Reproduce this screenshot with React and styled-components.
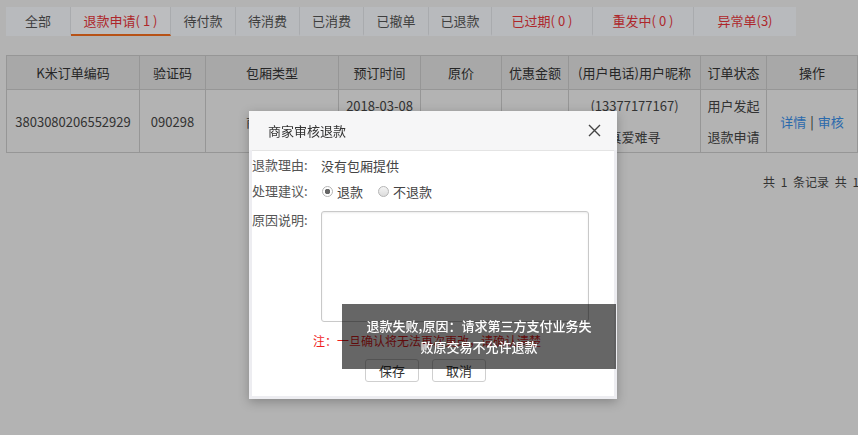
import styled, { createGlobalStyle } from "styled-components";

const GlobalStyle = createGlobalStyle`
  html, body {
    margin: 0;
    padding: 0;
    background: #efefef;
    overflow: hidden;
  }
  body {
    font-family: "Noto Sans CJK SC", "Noto Sans", sans-serif;
    font-size: 13px;
    color: #444;
  }
`;

const Page = styled.div`
  position: relative;
  width: 858px;
  height: 435px;
  padding: 7px 0 0 6px;
  box-sizing: border-box;
`;

const Tabs = styled.ul`
  display: flex;
  margin: 0;
  padding: 0;
  list-style: none;
`;

const Tab = styled.li`
  width: ${(p) => p.$w}px;
  height: 29px;
  box-sizing: border-box;
  display: flex;
  align-items: center;
  justify-content: center;
  background: ${(p) => (p.$active ? "#fbfcff" : "#f6f8fc")};
  border-right: 1px solid #e2e4e9;
  border-bottom: 2px solid ${(p) => (p.$active ? "#f46e1e" : "#f6f8fc")};
  color: ${(p) => (p.$red ? "#e8353a" : "#555")};
  font-size: 13px;
  white-space: pre;
  &:last-child {
    border-right: none;
  }
`;

const Table = styled.table`
  margin-top: 19px;
  width: 851px;
  border-collapse: collapse;
  table-layout: fixed;
  text-align: center;
`;

const Th = styled.th`
  height: 33px;
  background: #e0e0e0;
  border: 1px solid #c8c8c8;
  font-weight: normal;
  color: #333;
  padding: 0;
`;

const Td = styled.td`
  height: 62px;
  border: 1px solid #c8c8c8;
  background: #efefef;
  color: #444;
  line-height: 31px;
  padding: 0;
  white-space: nowrap;
`;

const Link = styled.a`
  color: #3a8ee6;
  text-decoration: none;
`;

const Sep = styled.span`
  color: #333;
  margin: 0 4px;
`;

const Pager = styled.div`
  margin: 20px 0 0 757px;
  font-size: 12px;
  color: #444;
  white-space: nowrap;
  word-spacing: 3px;
`;

const Overlay = styled.div`
  position: fixed;
  inset: 0;
  background: rgba(0, 0, 0, 0.25);
`;

const Dialog = styled.div`
  position: absolute;
  left: 249px;
  top: 111px;
  width: 368px;
  height: 288px;
  box-sizing: border-box;
  background: #ededf1;
  padding: 0 3px 3px;
  display: flex;
  flex-direction: column;
  box-shadow: 0 3px 10px rgba(0, 0, 0, 0.25);
`;

const TitleBar = styled.div`
  height: 39px;
  margin: 0 -3px;
  padding: 0 16px 0 19px;
  display: flex;
  align-items: center;
  justify-content: space-between;
  background: rgba(247, 247, 247, 0.94);
  color: #333;
  font-size: 13px;
`;

const Close = styled.svg`
  width: 13px;
  height: 13px;
`;

const Body = styled.div`
  flex: 1;
  background: #fff;
  border-top: 1px solid #e4e4e4;
  padding-top: 1px;
  display: flex;
  flex-direction: column;
`;

const Row = styled.div`
  display: flex;
  align-items: ${(p) => (p.$top ? "flex-start" : "center")};
  min-height: 26px;
  margin-top: ${(p) => p.$mt || 0}px;
`;

const Label = styled.span`
  width: 69px;
  flex: none;
  color: #555;
  line-height: 18px;
`;

const Value = styled.span`
  color: #444;
`;

const RadioGroup = styled.label`
  display: flex;
  align-items: center;
  margin-right: 14px;
  color: #444;
`;

const Radio = styled.span`
  width: 11px;
  height: 11px;
  border-radius: 50%;
  box-sizing: border-box;
  border: 1px solid #b5b5b5;
  background: ${(p) =>
    p.$checked
      ? "radial-gradient(circle, #666 0 2.5px, #fff 3px)"
      : "linear-gradient(#f4f4f4, #dcdcdc)"};
  margin: 1px 4px 0 1px;
`;

const TextArea = styled.textarea`
  width: 268px;
  height: 111px;
  box-sizing: border-box;
  border: 1px solid #c9c9c9;
  border-radius: 3px;
  box-shadow: inset 0 1px 2px rgba(0, 0, 0, 0.08);
  resize: none;
  outline: none;
  font-family: inherit;
`;

const Note = styled.div`
  margin: 10px 0 0 61px;
  color: #f01e1e;
  font-size: 12px;
  line-height: 18px;
`;

const Buttons = styled.div`
  display: flex;
  gap: 13px;
  margin: 9px 0 0 113px;
`;

const Button = styled.button`
  width: 54px;
  height: 23px;
  border: 1px solid #cfcfcf;
  border-radius: 3px;
  background: #fff;
  color: #333;
  font-family: inherit;
  font-size: 13px;
  padding: 0;
`;

const Toast = styled.div`
  position: absolute;
  left: 342px;
  top: 304px;
  width: 274px;
  height: 65px;
  box-sizing: border-box;
  padding: 11px 22px 0;
  background: rgba(0, 0, 0, 0.6);
  color: #fff;
  font-size: 13px;
  line-height: 21px;
  text-align: center;
  font-weight: 500;
`;

const tabs = [
  { t: "全部", w: 65 },
  { t: "退款申请( 1 )", w: 100, active: true, red: true },
  { t: "待付款", w: 65 },
  { t: "待消费", w: 64 },
  { t: "已消费", w: 64 },
  { t: "已撤单", w: 65 },
  { t: "已退款", w: 63 },
  { t: "已过期( 0 )", w: 101, red: true },
  { t: "重发中( 0 )", w: 101, red: true },
  { t: "异常单(3)", w: 102, red: true },
];

const cols = [
  ["K米订单编码", 133],
  ["验证码", 66],
  ["包厢类型", 133],
  ["预订时间", 82],
  ["原价", 81],
  ["优惠金额", 67],
  ["(用户电话)用户昵称", 132],
  ["订单状态", 66],
  ["操作", 91],
];

export default function App() {
  return (
    <>
      <GlobalStyle />
      <Page>
        <Tabs>
          {tabs.map((tab) => (
            <Tab key={tab.t} $w={tab.w} $active={tab.active} $red={tab.red}>
              {tab.t}
            </Tab>
          ))}
        </Tabs>

        <Table>
          <colgroup>
            {cols.map(([name, w]) => (
              <col key={name} style={{ width: w }} />
            ))}
          </colgroup>
          <thead>
            <tr>
              {cols.map(([name]) => (
                <Th key={name}>{name}</Th>
              ))}
            </tr>
          </thead>
          <tbody>
            <tr>
              <Td>3803080206552929</Td>
              <Td>090298</Td>
              <Td>商务包厢</Td>
              <Td>
                2018-03-08
                <br />
                18:00
              </Td>
              <Td>288.00</Td>
              <Td>0.00</Td>
              <Td>
                (13377177167)
                <br />
                真爱难寻
              </Td>
              <Td>
                用户发起
                <br />
                退款申请
              </Td>
              <Td>
                <Link>详情</Link>
                <Sep>|</Sep>
                <Link>审核</Link>
              </Td>
            </tr>
          </tbody>
        </Table>

        <Pager>共 1 条记录 共 1 页</Pager>

        <Overlay />

        <Dialog>
          <TitleBar>
            <span>商家审核退款</span>
            <Close viewBox="0 0 13 13">
              <path d="M1 1 L12 12 M12 1 L1 12" stroke="#444" strokeWidth="1.4" />
            </Close>
          </TitleBar>
          <Body>
            <Row>
              <Label>退款理由:</Label>
              <Value>没有包厢提供</Value>
            </Row>
            <Row>
              <Label>处理建议:</Label>
              <RadioGroup>
                <Radio $checked />
                退款
              </RadioGroup>
              <RadioGroup>
                <Radio />
                不退款
              </RadioGroup>
            </Row>
            <Row $top $mt={7}>
              <Label>原因说明:</Label>
              <TextArea />
            </Row>
            <Note>注：一旦确认将无法再次更改，请确认清楚</Note>
            <Buttons>
              <Button>保存</Button>
              <Button>取消</Button>
            </Buttons>
          </Body>
        </Dialog>

        <Toast>退款失败,原因：请求第三方支付业务失败原交易不允许退款</Toast>
      </Page>
    </>
  );
}
